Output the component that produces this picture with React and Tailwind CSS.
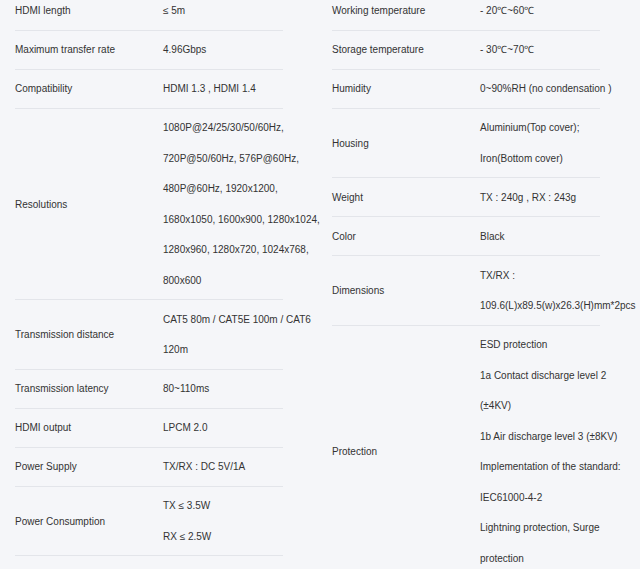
const left = [
  ['HDMI length', ['≤ 5m']],
  ['Maximum transfer rate', ['4.96Gbps']],
  ['Compatibility', ['HDMI 1.3 , HDMI 1.4']],
  [
    'Resolutions',
    [
      '1080P@24/25/30/50/60Hz,',
      '720P@50/60Hz, 576P@60Hz,',
      '480P@60Hz, 1920x1200,',
      '1680x1050, 1600x900, 1280x1024,',
      '1280x960, 1280x720, 1024x768,',
      '800x600',
    ],
  ],
  ['Transmission distance', ['CAT5 80m / CAT5E 100m / CAT6', '120m']],
  ['Transmission latency', ['80~110ms']],
  ['HDMI output', ['LPCM 2.0']],
  ['Power Supply', ['TX/RX : DC 5V/1A']],
  ['Power Consumption', ['TX ≤ 3.5W', 'RX ≤ 2.5W']],
];

const right = [
  ['Working temperature', ['- 20℃~60℃']],
  ['Storage temperature', ['- 30℃~70℃']],
  ['Humidity', ['0~90%RH (no condensation )']],
  ['Housing', ['Aluminium(Top cover);', 'Iron(Bottom cover)']],
  ['Weight', ['TX : 240g , RX : 243g']],
  ['Color', ['Black']],
  ['Dimensions', ['TX/RX :', '109.6(L)x89.5(w)x26.3(H)mm*2pcs']],
  [
    'Protection',
    [
      'ESD protection',
      '1a Contact discharge level 2',
      '(±4KV)',
      '1b Air discharge level 3 (±8KV)',
      'Implementation of the standard:',
      'IEC61000-4-2',
      'Lightning protection, Surge',
      'protection',
    ],
  ],
];

// one spec table, rows separated by a thin line
function SpecTable({ rows }) {
  return (
    <div className="w-[268px] flex flex-col">
      {rows.map(([label, lines]) => (
        <div key={label} className="flex items-center pt-[4.75px] pb-[2.75px] border-b border-[#e3e5ea]">
          <div className="w-[148px] shrink-0">{label}</div>
          <div className="flex flex-col whitespace-nowrap">
            {lines.map((l) => (
              <div key={l}>{l}</div>
            ))}
          </div>
        </div>
      ))}
    </div>
  );
}

export default function App() {
  return (
    <div
      className="w-[640px] h-[569px] overflow-hidden bg-[#f5f6f9] text-[#333333] text-[10px] leading-[30.5px]"
      style={{ fontFamily: '"Liberation Sans", Arial, sans-serif' }}
    >
      <div className="flex -mt-[8.5px]">
        <div className="w-[317px] pl-[15px]">
          <SpecTable rows={left} />
        </div>
        <div className="w-[317px] pl-[15px]">
          <SpecTable rows={right} />
        </div>
      </div>
    </div>
  );
}
